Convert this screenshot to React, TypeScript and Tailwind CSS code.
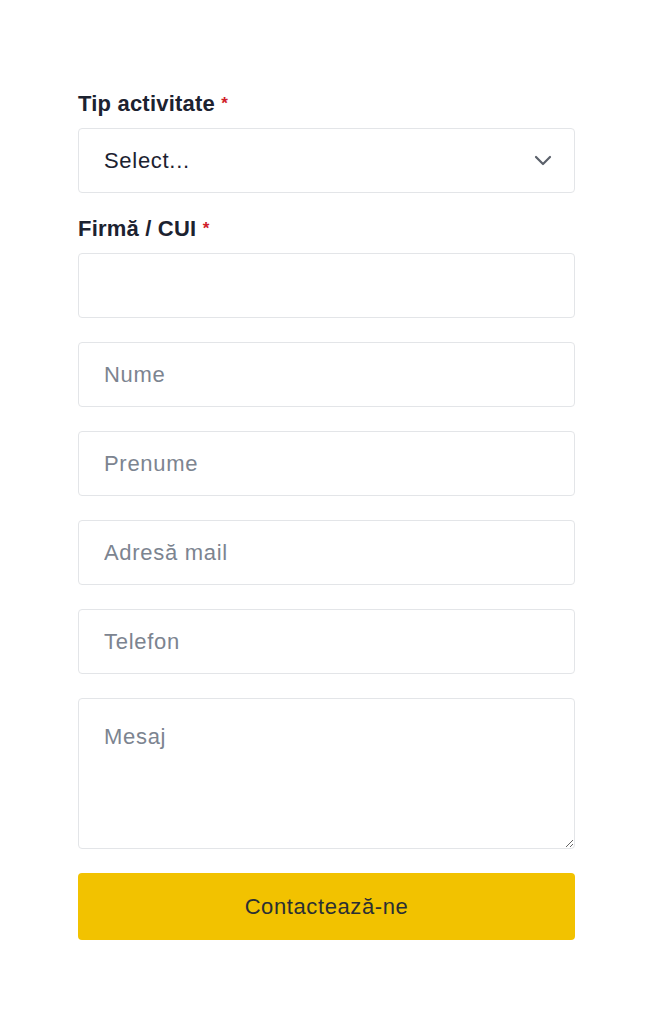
import React from "react";

const inputCls =
  "w-full h-[65px] rounded-[4px] border border-[#e3e5e8] bg-white px-[25px] text-[22px] tracking-[0.7px] text-[#1f2937] placeholder:text-[#7c8490] outline-none";

export default function App() {
  return (
    <div className="min-h-[1024px] w-[646px] bg-white" style={{ fontFamily: "'Liberation Sans', Arial, sans-serif" }}>
      <form className="ml-[78px] w-[497px] pt-[90px] flex flex-col">
        <label className="text-[22px] font-semibold text-[#1c2230] leading-[28px] tracking-[0.2px]">
          Tip activitate <span className="text-[#d0202a] text-[17px] align-top">*</span>
        </label>
        <div className="mt-[10px] relative">
          <div className="w-full h-[65px] rounded-[4px] border border-[#e3e5e8] bg-white pl-[25px] pr-[22px] flex items-center justify-between">
            <span className="text-[22px] tracking-[0.7px] text-[#1c2230]">Select...</span>
            <svg width="18" height="11" viewBox="0 0 18 11">
              <path d="M2 2 L9 9 L16 2" fill="none" stroke="#5b616b" strokeWidth="2.2" strokeLinecap="round" strokeLinejoin="round" />
            </svg>
          </div>
        </div>
        <label className="mt-[22px] text-[22px] font-semibold text-[#1c2230] leading-[28px] tracking-[0.2px]">
          Firmă / CUI <span className="text-[#d0202a] text-[17px] align-top">*</span>
        </label>
        <input className={"mt-[10px] " + inputCls} />
        <input className={"mt-[24px] " + inputCls} placeholder="Nume" />
        <input className={"mt-[24px] " + inputCls} placeholder="Prenume" />
        <input className={"mt-[24px] " + inputCls} placeholder="Adresă mail" />
        <input className={"mt-[24px] " + inputCls} placeholder="Telefon" />
        <textarea
          className="mt-[24px] w-full h-[151px] rounded-[4px] border border-[#e3e5e8] bg-white px-[25px] pt-[21px] text-[22px] tracking-[0.7px] text-[#1f2937] placeholder:text-[#7c8490] outline-none resize-y"
          placeholder="Mesaj"
        />
        <button
          type="button"
          className="mt-[24px] w-full h-[67px] rounded-[4px] bg-[#f2c200] text-[22px] tracking-[0.6px] font-medium text-[#2b2f33]"
        >
          Contactează-ne
        </button>
      </form>
    </div>
  );
}
